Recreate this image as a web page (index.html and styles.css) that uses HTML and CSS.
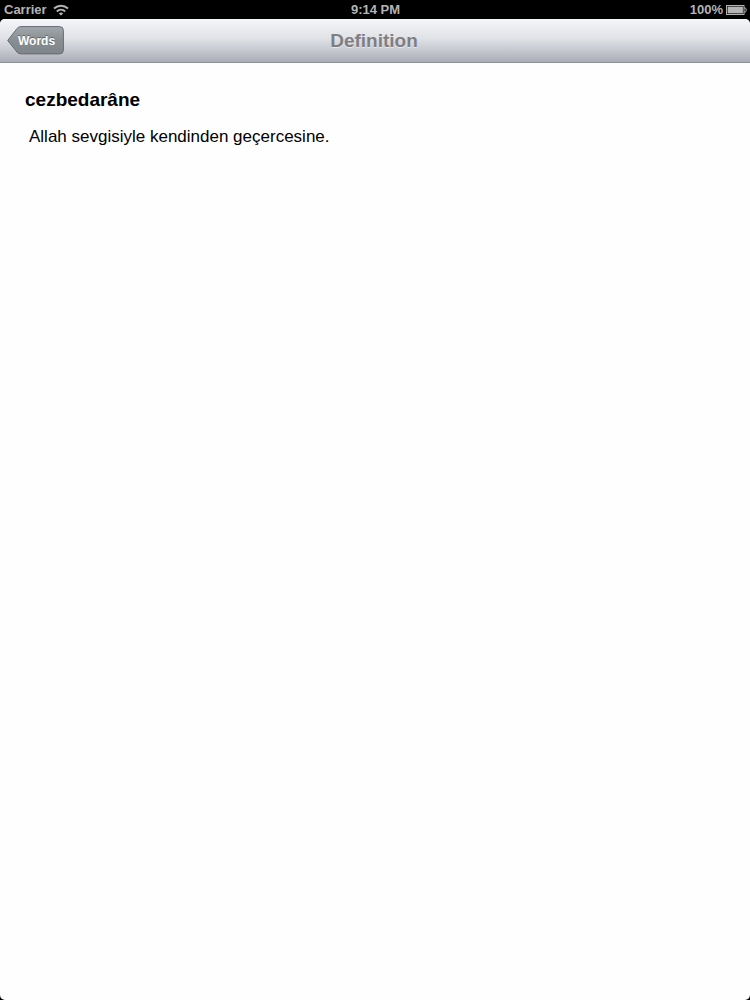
FILE: index.html
```html
<!DOCTYPE html>
<html lang="tr">
<head>
    <meta charset="UTF-8">
    <meta name="viewport" content="width=device-width, initial-scale=1.0">
    <title>Definition</title>
    <link rel="stylesheet" href="styles.css">
</head>
<body>
    <div class="status-bar">
        <div class="status-left">
            <span>Carrier</span>
            <svg class="wifi" width="16" height="12" viewBox="0 0 16 12" fill="none" stroke="#b4b4b4" stroke-width="2">
                <path d="M1 4.6C5 .9 11 .9 15 4.6"/>
                <path d="M3.8 7.5C6.2 5.3 9.8 5.3 12.2 7.5"/>
                <path d="M8 11.6L5.8 9.4C7.1 8.3 8.9 8.3 10.2 9.4Z" fill="#b4b4b4" stroke="none"/>
            </svg>
        </div>
        <div class="status-time">9:14 PM</div>
        <div class="status-right">
            <span>100%</span>
            <svg class="battery" width="21" height="10" viewBox="0 0 21 10">
                <rect x=".5" y=".5" width="17.5" height="9" fill="none" stroke="#b4b4b4"/>
                <rect x="1.6" y="1.6" width="15.3" height="6.8" fill="#b4b4b4"/>
                <path d="M18 3H19.2Q20.2 3 20.2 5T19.2 7H18" fill="none" stroke="#b4b4b4"/>
            </svg>
        </div>
    </div>
    <div class="screen">
        <div class="nav-bar">
            <button class="back-button" type="button">
                <svg class="back-shape" width="57" height="29" viewBox="0 0 57 29">
                    <defs>
                        <linearGradient id="back-fill" x1="0" y1="0" x2="0" y2="1">
                            <stop offset="0" stop-color="#a2a7ab"/>
                            <stop offset=".5" stop-color="#888e93"/>
                            <stop offset="1" stop-color="#7e858b"/>
                        </linearGradient>
                    </defs>
                    <path d="M.7 14.5L10 2.6Q11.6 .6 14 .6H52.5Q56.4 .6 56.4 4.5V24Q56.4 27.9 52.5 27.9H14Q11.6 27.9 10 26Z" fill="url(#back-fill)" stroke="#666c72"/>
                </svg>
                <span class="back-label">Words</span>
            </button>
            <h1 class="nav-title">Definition</h1>
        </div>
        <div class="content">
            <h2 class="word">cezbedarâne</h2>
            <p class="meaning">Allah sevgisiyle kendinden geçercesine.</p>
        </div>
    </div>
</body>
</html>
```
FILE: styles.css
```css
body {
    font-family: "Liberation Sans", Arial, sans-serif;
    background-color: #000;
    margin: 0;
    min-height: 100vh;
    display: flex;
    flex-direction: column;
}

.status-bar {
    display: grid;
    grid-template-columns: 1fr auto 1fr;
    align-items: center;
    height: 19px;
    padding: 0 3px 0 4px;
    background-color: #000;
    color: #b4b4b4;
    font-size: 13px;
    font-weight: bold;
}

.status-left {
    display: flex;
    align-items: center;
    gap: 6px;
}

.status-right {
    display: flex;
    align-items: center;
    justify-content: flex-end;
    gap: 3px;
}

.screen {
    flex: 1;
    background-color: #fefefe;
    border-radius: 5px;
    overflow: hidden;
}

.nav-bar {
    display: grid;
    grid-template-columns: 1fr auto 1fr;
    align-items: center;
    height: 43px;
    padding: 0 9px 0 7px;
    background: linear-gradient(#f5f6f8, #e0e2e7 45%, #cbcdd5 68%, #aaacb7);
    border-bottom: 1px solid #8f919a;
}

.back-button {
    position: relative;
    justify-self: start;
    width: 57px;
    height: 29px;
    padding: 0 9px 0 11px;
    border: none;
    background: none;
    color: #fff;
    font-family: inherit;
    font-size: 12px;
    font-weight: bold;
    text-shadow: 0 -1px 0 #5d6369;
    cursor: pointer;
}

.back-shape {
    position: absolute;
    top: 0;
    left: 0;
}

.back-label {
    position: relative;
}

.nav-title {
    margin: 0;
    color: #7f7f82;
    font-size: 19px;
    text-shadow: 0 1px 0 #e6e7eb;
}

.content {
    padding: 26px 25px;
    color: #000;
}

.word {
    margin: 0;
    font-size: 19px;
    line-height: 22px;
}

.meaning {
    margin: 16px 4px 0;
    font-size: 17px;
    line-height: 20px;
}
```
